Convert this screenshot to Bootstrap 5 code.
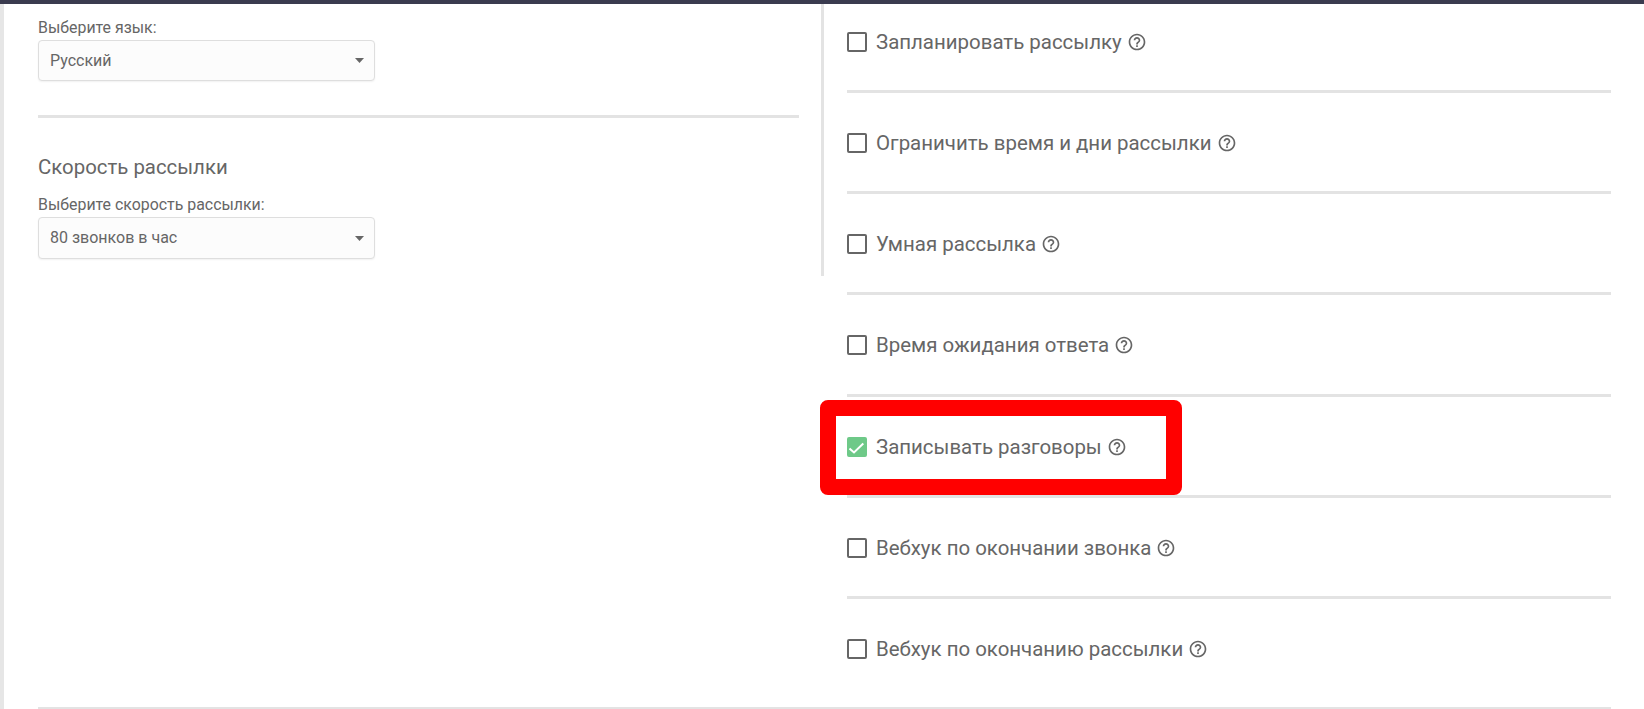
<!DOCTYPE html>
<html lang="ru">
<head>
  <meta charset="UTF-8" />
  <meta name="viewport" content="width=device-width, initial-scale=1.0"/>
  <title>Настройки рассылки</title>
  <link href="https://cdn.jsdelivr.net/npm/bootstrap@5.3.3/dist/css/bootstrap.min.css" rel="stylesheet">
  <style>
    html, body { height: 709px; overflow: hidden; }
    body { font-family: Roboto, "Noto Sans", sans-serif; color: #666; background: #fff; }
    .top-strip { height: 4px; background: #3a3b4f; }
    .page-frame { position: relative; height: 705px; border-left: 4px solid #e6e6e6; padding: 0 33px 0 34px; }
    .panes { height: 703px; }
    .left-pane { width: 786px; height: 272px; border-right: 3px solid #e3e3e3; padding-right: 22px; padding-top: 15px; }
    .right-pane { width: 787px; padding-left: 23px; }
    .field-label { display: block; font-size: 15.9px; line-height: 18px; margin: 0 0 3px; color: #666; }
    .lang-select {
      width: 337px; height: 41px; padding: 0 24px 0 11px; font-size: 16px; color: #666;
      background-color: #fcfcfc; border: 1px solid #dedede; border-radius: 4px;
      box-shadow: 0 1px 2px rgba(0,0,0,.06);
      background-image: url("data:image/svg+xml,%3Csvg xmlns='http://www.w3.org/2000/svg' width='9' height='5'%3E%3Cpath d='M0 0h9L4.5 5z' fill='%23666'/%3E%3C/svg%3E");
      background-size: 9px 5px; background-position: right 10px center;
    }
    .speed-select { height: 42px; }
    .pane-rule { height: 3px; background: #e3e3e3; margin: 34px 0 0; }
    .speed-title { font-size: 20.4px; line-height: 24px; font-weight: 400; margin: 37px 0 17px; color: #666; }
    .opt-row { height: 101.2px; padding-top: 40px; border-bottom: 3px solid #e3e3e3; font-size: 20.45px; line-height: 20px; }
    .opt-row.first-row { height: 89px; padding-top: 28px; }
    .opt-row.last-row { border-bottom: 0; }
    .form-check-input.opt-check { width: 20px; height: 20px; margin: 0 9px 0 0; border: 2px solid #666; border-radius: 2px; flex: none; }
    .form-check-input.opt-check:checked {
      background-color: #6ec988; border-color: #6ec988;
      background-image: url("data:image/svg+xml,%3Csvg xmlns='http://www.w3.org/2000/svg' viewBox='0 0 20 20'%3E%3Cpath d='M2.5 11.5 7 15.5 16.3 6.5' fill='none' stroke='%23fff' stroke-width='2'/%3E%3C/svg%3E");
      background-origin: border-box; background-size: 20px 20px; background-position: 0 0;
    }
    .opt-label { margin: 0; color: #666; }
    .help-icon { width: 20px; height: 20px; margin-left: 5px; fill: #666; flex: none; }
    .foot-rule { height: 2px; background: #e3e3e3; }
    .red-mark { position: absolute; left: 816px; top: 396px; width: 362px; height: 95px; border: 16px solid #f00; border-radius: 8px; }
  </style>
</head>
<body>
  <div class="top-strip"></div>
  <div class="page-frame">
    <div class="panes d-flex align-items-start">
      <div class="left-pane">
        <label class="field-label" for="lang">Выберите язык:</label>
        <select class="form-select lang-select" id="lang">
          <option selected>Русский</option>
        </select>
        <div class="pane-rule"></div>
        <h5 class="speed-title">Скорость рассылки</h5>
        <label class="field-label" for="speed">Выберите скорость рассылки:</label>
        <select class="form-select lang-select speed-select" id="speed">
          <option selected>80 звонков в час</option>
        </select>
      </div>
      <div class="right-pane">
        <div class="opt-row first-row d-flex align-items-start">
          <input class="form-check-input opt-check" type="checkbox" id="o1">
          <label class="opt-label" for="o1">Запланировать рассылку</label>
          <svg class="help-icon" viewBox="0 0 24 24"><path d="M11 18h2v-2h-2v2zm1-16C6.48 2 2 6.48 2 12s4.48 10 10 10 10-4.48 10-10S17.52 2 12 2zm0 18c-4.41 0-8-3.59-8-8s3.59-8 8-8 8 3.59 8 8-3.59 8-8 8zm0-14c-2.21 0-4 1.79-4 4h2c0-1.1.9-2 2-2s2 .9 2 2c0 2-3 1.75-3 5h2c0-2.25 3-2.5 3-5 0-2.21-1.79-4-4-4z"/></svg>
        </div>
        <div class="opt-row d-flex align-items-start">
          <input class="form-check-input opt-check" type="checkbox" id="o2">
          <label class="opt-label" for="o2">Ограничить время и дни рассылки</label>
          <svg class="help-icon" viewBox="0 0 24 24"><path d="M11 18h2v-2h-2v2zm1-16C6.48 2 2 6.48 2 12s4.48 10 10 10 10-4.48 10-10S17.52 2 12 2zm0 18c-4.41 0-8-3.59-8-8s3.59-8 8-8 8 3.59 8 8-3.59 8-8 8zm0-14c-2.21 0-4 1.79-4 4h2c0-1.1.9-2 2-2s2 .9 2 2c0 2-3 1.75-3 5h2c0-2.25 3-2.5 3-5 0-2.21-1.79-4-4-4z"/></svg>
        </div>
        <div class="opt-row d-flex align-items-start">
          <input class="form-check-input opt-check" type="checkbox" id="o3">
          <label class="opt-label" for="o3">Умная рассылка</label>
          <svg class="help-icon" viewBox="0 0 24 24"><path d="M11 18h2v-2h-2v2zm1-16C6.48 2 2 6.48 2 12s4.48 10 10 10 10-4.48 10-10S17.52 2 12 2zm0 18c-4.41 0-8-3.59-8-8s3.59-8 8-8 8 3.59 8 8-3.59 8-8 8zm0-14c-2.21 0-4 1.79-4 4h2c0-1.1.9-2 2-2s2 .9 2 2c0 2-3 1.75-3 5h2c0-2.25 3-2.5 3-5 0-2.21-1.79-4-4-4z"/></svg>
        </div>
        <div class="opt-row d-flex align-items-start">
          <input class="form-check-input opt-check" type="checkbox" id="o4">
          <label class="opt-label" for="o4">Время ожидания ответа</label>
          <svg class="help-icon" viewBox="0 0 24 24"><path d="M11 18h2v-2h-2v2zm1-16C6.48 2 2 6.48 2 12s4.48 10 10 10 10-4.48 10-10S17.52 2 12 2zm0 18c-4.41 0-8-3.59-8-8s3.59-8 8-8 8 3.59 8 8-3.59 8-8 8zm0-14c-2.21 0-4 1.79-4 4h2c0-1.1.9-2 2-2s2 .9 2 2c0 2-3 1.75-3 5h2c0-2.25 3-2.5 3-5 0-2.21-1.79-4-4-4z"/></svg>
        </div>
        <div class="opt-row d-flex align-items-start">
          <input class="form-check-input opt-check" type="checkbox" id="o5" checked>
          <label class="opt-label" for="o5">Записывать разговоры</label>
          <svg class="help-icon" viewBox="0 0 24 24"><path d="M11 18h2v-2h-2v2zm1-16C6.48 2 2 6.48 2 12s4.48 10 10 10 10-4.48 10-10S17.52 2 12 2zm0 18c-4.41 0-8-3.59-8-8s3.59-8 8-8 8 3.59 8 8-3.59 8-8 8zm0-14c-2.21 0-4 1.79-4 4h2c0-1.1.9-2 2-2s2 .9 2 2c0 2-3 1.75-3 5h2c0-2.25 3-2.5 3-5 0-2.21-1.79-4-4-4z"/></svg>
        </div>
        <div class="opt-row d-flex align-items-start">
          <input class="form-check-input opt-check" type="checkbox" id="o6">
          <label class="opt-label" for="o6">Вебхук по окончании звонка</label>
          <svg class="help-icon" viewBox="0 0 24 24"><path d="M11 18h2v-2h-2v2zm1-16C6.48 2 2 6.48 2 12s4.48 10 10 10 10-4.48 10-10S17.52 2 12 2zm0 18c-4.41 0-8-3.59-8-8s3.59-8 8-8 8 3.59 8 8-3.59 8-8 8zm0-14c-2.21 0-4 1.79-4 4h2c0-1.1.9-2 2-2s2 .9 2 2c0 2-3 1.75-3 5h2c0-2.25 3-2.5 3-5 0-2.21-1.79-4-4-4z"/></svg>
        </div>
        <div class="opt-row last-row d-flex align-items-start">
          <input class="form-check-input opt-check" type="checkbox" id="o7">
          <label class="opt-label" for="o7">Вебхук по окончанию рассылки</label>
          <svg class="help-icon" viewBox="0 0 24 24"><path d="M11 18h2v-2h-2v2zm1-16C6.48 2 2 6.48 2 12s4.48 10 10 10 10-4.48 10-10S17.52 2 12 2zm0 18c-4.41 0-8-3.59-8-8s3.59-8 8-8 8 3.59 8 8-3.59 8-8 8zm0-14c-2.21 0-4 1.79-4 4h2c0-1.1.9-2 2-2s2 .9 2 2c0 2-3 1.75-3 5h2c0-2.25 3-2.5 3-5 0-2.21-1.79-4-4-4z"/></svg>
        </div>
      </div>
    </div>
    <div class="foot-rule"></div>
    <div class="red-mark"></div>
  </div>
  <script src="https://cdn.jsdelivr.net/npm/bootstrap@5.3.3/dist/js/bootstrap.bundle.min.js"></script>
</body>
</html>
